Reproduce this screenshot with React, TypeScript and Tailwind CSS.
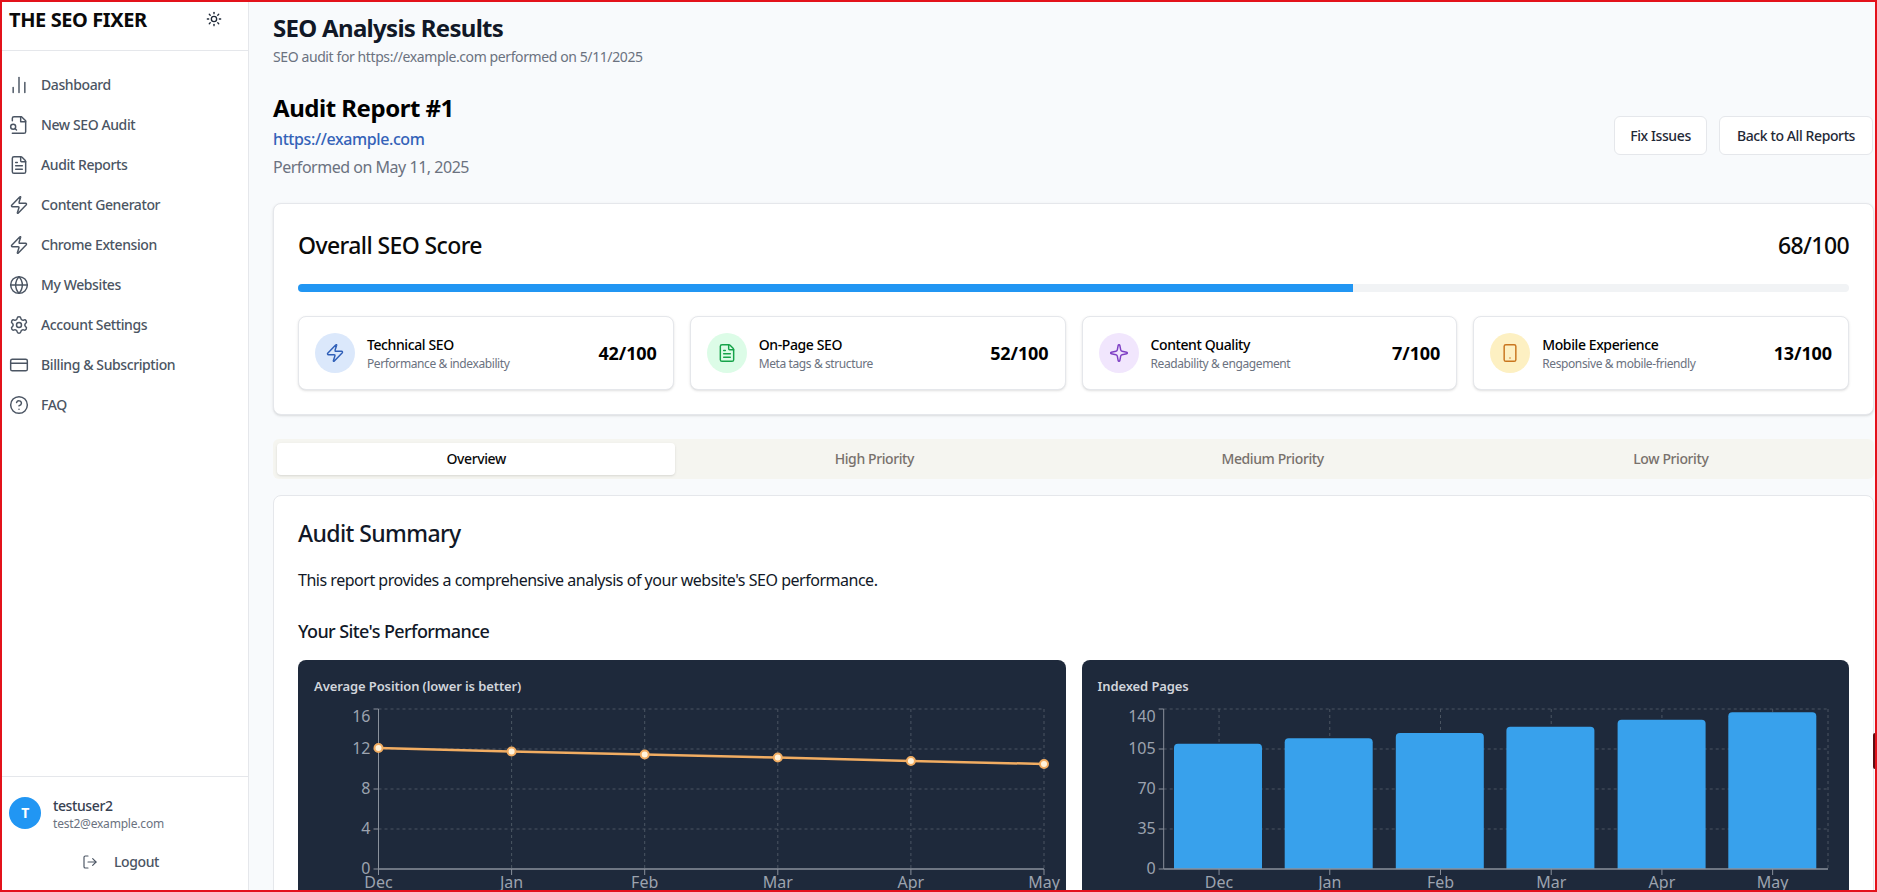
import React from "react";
import {
  ChartNoAxesColumn, FileText, Zap, Globe, Settings, CreditCard, CircleHelp, LogOut, Sun, Sparkle, Smartphone,
} from "lucide-react";

function FileSearchOld({ className, strokeWidth = 2 }: { className?: string; strokeWidth?: number }) {
  return (
    <svg viewBox="0 0 24 24" fill="none" stroke="currentColor" strokeWidth={strokeWidth} strokeLinecap="round" strokeLinejoin="round" className={className}>
      <path d="M4 22h14a2 2 0 0 0 2-2V7l-5-5H6a2 2 0 0 0-2 2v3" />
      <path d="M14 2v6h6" />
      <circle cx="5" cy="14" r="3" />
      <path d="m9 18-1.5-1.5" />
    </svg>
  );
}

const nav = [
  { label: "Dashboard", Icon: ChartNoAxesColumn },
  { label: "New SEO Audit", Icon: FileSearchOld },
  { label: "Audit Reports", Icon: FileText },
  { label: "Content Generator", Icon: Zap },
  { label: "Chrome Extension", Icon: Zap },
  { label: "My Websites", Icon: Globe },
  { label: "Account Settings", Icon: Settings },
  { label: "Billing & Subscription", Icon: CreditCard },
  { label: "FAQ", Icon: CircleHelp },
];

const scores = [
  { title: "Technical SEO", sub: "Performance & indexability", score: "42/100", Icon: Zap, bg: "bg-[#dbe8fb]", fg: "text-[#2f5fb8]" },
  { title: "On-Page SEO", sub: "Meta tags & structure", score: "52/100", Icon: FileText, bg: "bg-[#dcfce7]", fg: "text-[#16a34a]" },
  { title: "Content Quality", sub: "Readability & engagement", score: "7/100", Icon: Sparkle, bg: "bg-[#f1e6fd]", fg: "text-[#7e3fc4]" },
  { title: "Mobile Experience", sub: "Responsive & mobile-friendly", score: "13/100", Icon: Smartphone, bg: "bg-[#fdf0c2]", fg: "text-[#c9761f]" },
];

const months = ["Dec", "Jan", "Feb", "Mar", "Apr", "May"];

function LineChart() {
  const ox = 314, oy = 700;
  const left = 378.5 - ox, right = 1044 - ox, top = 709 - oy, bottom = 869 - oy;
  const ys = [748, 751.5, 754.5, 757.5, 761, 764].map((y) => y - oy);
  const xs = months.map((_, i) => left + ((right - left) * i) / 5);
  const ticks = ["16", "12", "8", "4", "0"];
  const gy = ticks.map((_, i) => top + ((bottom - top) * i) / 4);
  return (
    <svg width="736" height="200" className="block overflow-visible tracking-normal">
      {gy.slice(0, 4).map((y) => (
        <line key={y} x1={left} x2={right} y1={y} y2={y} stroke="#4b5563" strokeDasharray="3 3" />
      ))}
      {xs.slice(1).map((x) => (
        <line key={x} x1={x} x2={x} y1={top} y2={bottom} stroke="#4b5563" strokeDasharray="3 3" />
      ))}
      <line x1={left} x2={left} y1={top} y2={bottom} stroke="#8a919c" />
      <line x1={left} x2={right} y1={bottom} y2={bottom} stroke="#8a919c" strokeWidth="1.5" />
      {gy.map((y, i) => (
        <g key={y}>
          <line x1={left - 5} x2={left} y1={y} y2={y} stroke="#8a919c" />
          <text x={left - 8} y={y + (i === 0 ? 13 : 5)} textAnchor="end" fontSize="16" fill="#9ca3af">{ticks[i]}</text>
        </g>
      ))}
      {xs.map((x, i) => (
        <g key={x}>
          <line x1={x} x2={x} y1={bottom} y2={bottom + 6} stroke="#8a919c" />
          <text x={x} y={bottom + 19} textAnchor="middle" fontSize="16" fill="#9ca3af">{months[i]}</text>
        </g>
      ))}
      <polyline points={xs.map((x, i) => `${x},${ys[i]}`).join(" ")} fill="none" stroke="#f2ad62" strokeWidth="2.5" />
      {xs.map((x, i) => (
        <circle key={x} cx={x} cy={ys[i]} r="4" fill="#fff3dc" stroke="#f2ad62" strokeWidth="2" />
      ))}
    </svg>
  );
}

function BarChart() {
  const ox = 1098, oy = 700;
  const left = 1163.7 - ox, right = 1828 - ox, top = 709 - oy, bottom = 869 - oy;
  const bars = [
    [1174, 743.7], [1284.7, 738.3], [1395.8, 733], [1506.4, 726.7], [1617.6, 719.7], [1728.3, 712.3],
  ];
  const ticks = ["140", "105", "70", "35", "0"];
  const gy = ticks.map((_, i) => top + ((bottom - top) * i) / 4);
  const cw = (right - left) / 6;
  const cx = months.map((_, i) => left + cw * (i + 0.5));
  return (
    <svg width="735" height="200" className="block overflow-visible tracking-normal">
      {gy.slice(0, 4).map((y) => (
        <line key={y} x1={left} x2={right} y1={y} y2={y} stroke="#4b5563" strokeDasharray="3 3" />
      ))}
      {cx.map((x) => (
        <line key={x} x1={x} x2={x} y1={top} y2={bottom} stroke="#4b5563" strokeDasharray="3 3" />
      ))}
      <line x1={right} x2={right} y1={top} y2={bottom} stroke="#4b5563" strokeDasharray="3 3" />
      <line x1={left} x2={left} y1={top} y2={bottom} stroke="#8a919c" />
      {bars.map(([x, y]) => (
        <path
          key={x}
          d={`M${x - ox} ${bottom} V${y - oy + 4} Q${x - ox} ${y - oy} ${x - ox + 4} ${y - oy} H${x - ox + 84} Q${x - ox + 88} ${y - oy} ${x - ox + 88} ${y - oy + 4} V${bottom} Z`}
          fill="#38a1ec"
        />
      ))}
      <line x1={left} x2={right} y1={bottom} y2={bottom} stroke="#8a919c" strokeWidth="1.5" />
      {gy.map((y, i) => (
        <g key={y}>
          <line x1={left - 5} x2={left} y1={y} y2={y} stroke="#8a919c" />
          <text x={left - 8} y={y + (i === 0 ? 13 : 5)} textAnchor="end" fontSize="16" fill="#9ca3af">{ticks[i]}</text>
        </g>
      ))}
      {cx.map((x, i) => (
        <g key={x}>
          <line x1={x} x2={x} y1={bottom} y2={bottom + 6} stroke="#8a919c" />
          <text x={x} y={bottom + 19} textAnchor="middle" fontSize="16" fill="#9ca3af">{months[i]}</text>
        </g>
      ))}
    </svg>
  );
}

export default function App() {
  return (
    <div className="relative flex h-screen w-screen overflow-hidden bg-[#f8fafc] font-['Noto_Sans','Open_Sans',sans-serif] tracking-[-0.4px] text-[#0a0a0a]">
      <aside className="flex h-full w-[249px] shrink-0 flex-col border-r border-[#e5e7eb] bg-white">
        <div className="flex h-[51px] shrink-0 items-start justify-between border-b border-[#e5e7eb] pl-[9px] pr-[26px] pt-[6px]">
          <span className="text-[20px] font-bold leading-7">THE SEO FIXER</span>
          <Sun className="mt-[5px] size-4 text-[#1f2937]" />
        </div>
        <nav className="flex flex-col pl-[9px] pt-[14px]">
          {nav.map(({ label, Icon }) => (
            <div key={label} className="flex h-10 items-center gap-3 text-sm font-medium text-[#4b5563]">
              <Icon className="size-5" strokeWidth={1.75} />
              <span>{label}</span>
            </div>
          ))}
        </nav>
        <div className="mt-auto border-t border-[#e5e7eb] pb-[12px] pl-[9px] pt-[17px]">
          <div className="flex items-center gap-3">
            <div className="flex size-8 items-center justify-center rounded-full bg-[#2196f3] text-sm font-bold text-white">T</div>
            <div className="pt-[2px]">
              <div className="text-sm font-medium leading-5 text-[#374151]">testuser2</div>
              <div className="text-xs leading-4 tracking-[-0.2px] text-[#6b7280]">test2@example.com</div>
            </div>
          </div>
          <div className="mt-[12px] flex h-9 items-center gap-4 pl-[73px] text-sm font-medium text-[#4b5563]">
            <LogOut className="size-4" strokeWidth={1.75} />
            <span>Logout</span>
          </div>
        </div>
      </aside>

      <main className="min-w-0 flex-1 pl-6 pr-[3px] pt-[12px]">
        <h1 className="text-2xl font-bold leading-8 tracking-[-0.7px] text-[#111827]">SEO Analysis Results</h1>
        <p className="mt-[3px] text-sm leading-5 text-[#6b7280]">SEO audit for https://example.com performed on 5/11/2025</p>

        <div className="mt-[25px] flex items-center justify-between">
          <div>
            <h2 className="text-2xl font-bold leading-8 tracking-[-0.48px] text-black">Audit Report #1</h2>
            <a className="mt-[3px] block text-base font-medium leading-6 text-[#3462b8]">https://example.com</a>
            <p className="mt-1 text-base leading-6 tracking-[-0.48px] text-[#6b7280]">Performed on May 11, 2025</p>
          </div>
          <div className="mr-[1px] flex gap-3">
            <button className="h-[39px] w-[93px] rounded-md border border-[#e5e7eb] bg-white text-sm font-medium text-[#1f2937]">Fix Issues</button>
            <button className="h-[39px] w-[154px] rounded-md border border-[#e5e7eb] bg-white text-sm font-medium text-[#1f2937]">Back to All Reports</button>
          </div>
        </div>

        <section className="mt-6 rounded-lg border border-[#e5e7eb] bg-white p-6 shadow-sm">
          <div className="flex h-[34px] items-center justify-between">
            <h2 className="text-[23px] font-medium tracking-[-0.6px]">Overall SEO Score</h2>
            <span className="text-[23px] font-medium tracking-[-0.6px]">68/100</span>
          </div>
          <div className="mt-[22px] h-2 overflow-hidden rounded-full bg-[#f1f3f5]">
            <div className="h-full w-[68%] bg-[#2196f3]" />
          </div>
          <div className="mt-6 grid grid-cols-4 gap-4">
            {scores.map(({ title, sub, score, Icon, bg, fg }) => (
              <div key={title} className="flex h-[74px] items-center gap-3 rounded-lg border border-[#e5e7eb] bg-white px-4 shadow-sm">
                <div className={`flex size-10 shrink-0 items-center justify-center rounded-full ${bg} ${fg}`}>
                  <Icon className="size-5" strokeWidth={1.75} />
                </div>
                <div className="min-w-0 flex-1">
                  <div className="text-sm font-medium leading-5 text-black">{title}</div>
                  <div className="mt-[1px] text-xs leading-4 text-[#6b7280]">{sub}</div>
                </div>
                <div className="text-lg font-bold tracking-[-0.1px] text-black">{score}</div>
              </div>
            ))}
          </div>
        </section>

        <div className="mt-6 grid h-[40px] grid-cols-4 items-center rounded-md bg-[#f5f5f0] px-[4px] text-sm font-medium text-[#78716c]">
          <div className="flex h-[32px] items-center justify-center rounded-sm bg-white text-[#0a0a0a] shadow-sm">Overview</div>
          <div className="text-center">High Priority</div>
          <div className="text-center">Medium Priority</div>
          <div className="text-center">Low Priority</div>
        </div>

        <section className="mt-[16px] rounded-lg border border-[#e5e7eb] bg-white px-6 pt-[21px]">
          <h2 className="text-[23px] font-medium leading-8 tracking-[-0.6px] text-[#111827]">Audit Summary</h2>
          <p className="mt-[19px] text-base leading-6 tracking-[-0.48px] text-[#111827]">This report provides a comprehensive analysis of your website's SEO performance.</p>
          <h3 className="mt-[25px] text-lg font-medium leading-7 tracking-[-0.6px] text-[#111827]">Your Site's Performance</h3>
          <div className="mt-[15px] grid grid-cols-2 gap-4">
            <div className="h-[260px] rounded-lg bg-[#1e293b] px-4 pt-4">
              <div className="text-[13px] font-semibold leading-5 tracking-[-0.1px] text-[#d1d5db]">Average Position (lower is better)</div>
              <div className="mt-1"><LineChart /></div>
            </div>
            <div className="h-[260px] rounded-lg bg-[#1e293b] px-4 pt-4">
              <div className="text-[13px] font-semibold leading-5 tracking-[-0.1px] text-[#d1d5db]">Indexed Pages</div>
              <div className="mt-1"><BarChart /></div>
            </div>
          </div>
        </section>
      </main>

      <div className="pointer-events-none absolute inset-0 border-2 border-[#e3121b]" />
      <div className="pointer-events-none absolute right-[2px] top-[733px] h-[36px] w-[2px] rounded-l-sm bg-[#5a1015]" />
    </div>
  );
}
